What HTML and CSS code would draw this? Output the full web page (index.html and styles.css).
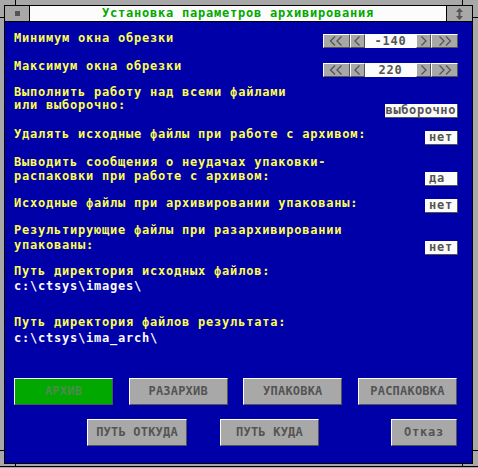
FILE: index.html
```html
<html>
<head>
	<meta charset="utf-8">
	<link rel="stylesheet" href="styles.css">
</head>
<body>
<div class="frame">
	<span class="tick tk-tl"></span>
	<span class="tick tk-tr"></span>
	<span class="tick tk-bl"></span>
	<span class="tick tk-br"></span>
	<span class="tick tk-lt"></span>
	<span class="tick tk-lb"></span>
	<span class="tick tk-rt"></span>
	<span class="tick tk-rb"></span>

	<div class="window">
		<div class="titlebar">
			<div class="sysbtn"><span class="sysmark"></span></div>
			<div class="title">Установка параметров архивирования</div>
			<div class="sizebtn">
				<svg width="7" height="12" viewBox="0 0 7 12"><polygon points="3.5,0 7,4 4.5,4 4.5,8 7,8 3.5,12 0,8 2.5,8 2.5,4 0,4" fill="#545454"/></svg>
			</div>
		</div>

		<div class="panel">
			<div class="row r1">
				<div class="label">Минимум окна обрезки</div>
				<div class="spin">
					<div class="sbtn wide"><svg width="25" height="12" viewBox="0 0 25 12"><polyline points="11,1.5 6.5,6 11,10.5" /><polyline points="17.5,1.5 13,6 17.5,10.5" /></svg></div>
					<div class="sbtn"><svg width="13" height="12" viewBox="0 0 13 12"><polyline points="8.5,1.5 4,6 8.5,10.5" /></svg></div>
					<div class="sval">-140</div>
					<div class="sbtn"><svg width="13" height="12" viewBox="0 0 13 12"><polyline points="4.5,1.5 9,6 4.5,10.5" /></svg></div>
					<div class="sbtn wide"><svg width="25" height="12" viewBox="0 0 25 12"><polyline points="7.5,1.5 12,6 7.5,10.5" /><polyline points="14,1.5 18.5,6 14,10.5" /></svg></div>
				</div>
			</div>

			<div class="row r2">
				<div class="label">Максимум окна обрезки</div>
				<div class="spin">
					<div class="sbtn wide"><svg width="25" height="12" viewBox="0 0 25 12"><polyline points="11,1.5 6.5,6 11,10.5" /><polyline points="17.5,1.5 13,6 17.5,10.5" /></svg></div>
					<div class="sbtn"><svg width="13" height="12" viewBox="0 0 13 12"><polyline points="8.5,1.5 4,6 8.5,10.5" /></svg></div>
					<div class="sval">220</div>
					<div class="sbtn"><svg width="13" height="12" viewBox="0 0 13 12"><polyline points="4.5,1.5 9,6 4.5,10.5" /></svg></div>
					<div class="sbtn wide"><svg width="25" height="12" viewBox="0 0 25 12"><polyline points="7.5,1.5 12,6 7.5,10.5" /><polyline points="14,1.5 18.5,6 14,10.5" /></svg></div>
				</div>
			</div>

			<div class="row r3">
				<div class="label">Выполнить работу над всеми файлами<br>или выборочно:</div>
				<div class="val long">выборочно</div>
			</div>

			<div class="row r4">
				<div class="label">Удалять исходные файлы при работе с архивом:</div>
				<div class="val">нет</div>
			</div>

			<div class="row r5">
				<div class="label">Выводить сообщения о неудачах упаковки-<br>распаковки при работе с архивом:</div>
				<div class="val">да</div>
			</div>

			<div class="row r6">
				<div class="label">Исходные файлы при архивировании упакованы:</div>
				<div class="val">нет</div>
			</div>

			<div class="row r7">
				<div class="label">Результирующие файлы при разархивировании<br>упакованы:</div>
				<div class="val">нет</div>
			</div>

			<div class="path p1">
				<div class="label">Путь директория исходных файлов:</div>
				<div class="pval">c:\ctsys\images\</div>
			</div>

			<div class="path p2">
				<div class="label">Путь директория файлов результата:</div>
				<div class="pval">c:\ctsys\ima_arch\</div>
			</div>

			<div class="actions">
				<div class="btn green">АРХИВ</div>
				<div class="btn">РАЗАРХИВ</div>
				<div class="btn">УПАКОВКА</div>
				<div class="btn">РАСПАКОВКА</div>
			</div>

			<div class="actions second">
				<div class="btn from">ПУТЬ ОТКУДА</div>
				<div class="btn to">ПУТЬ КУДА</div>
				<div class="btn cancel">Отказ</div>
			</div>
		</div>
	</div>
</div>
</body>
</html>
```

FILE: styles.css
```css
html {
	background: #a8a8a8;
}

body {
	margin: 0;
	font-family: "DejaVu Sans Mono", "Liberation Mono", monospace;
	font-weight: bold;
	font-size: 12px;
	letter-spacing: 0.78px;
	line-height: 14px;
	color: #545454;
}

/* outer frame */
.frame {
	position: relative;
	height: 467px;
	box-sizing: border-box;
	padding: 5px 5px 0 4px;
	border-bottom: 1px solid #000;
}

.tick {
	position: absolute;
	background: #000;
}
.tk-tl { left: 15px; top: 0; width: 1px; height: 5px; }
.tk-tr { left: 462px; top: 0; width: 1px; height: 5px; }
.tk-bl { left: 15px; top: 464px; width: 1px; height: 2px; }
.tk-br { left: 462px; top: 464px; width: 1px; height: 2px; }
.tk-lt { left: 0; top: 17px; width: 4px; height: 1px; }
.tk-lb { left: 0; top: 450px; width: 4px; height: 1px; }
.tk-rt { right: 0; top: 17px; width: 5px; height: 1px; }
.tk-rb { right: 0; top: 450px; width: 5px; height: 1px; }

.window {
	height: 459px;
	box-sizing: border-box;
	border: 1px solid #000;
	display: flex;
	flex-direction: column;
}

/* title bar */
.titlebar {
	display: flex;
	height: 15px;
	border-bottom: 1px solid #000;
}
.sysbtn {
	width: 24px;
	border-right: 1px solid #000;
	background: #a8a8a8;
	display: flex;
	align-items: center;
	justify-content: center;
}
.sysmark {
	width: 5px;
	height: 5px;
	background: #545454;
}
.title {
	flex: 1;
	background: #fcfcfc;
	color: #00a800;
	text-align: center;
	line-height: 15px;
}
.sizebtn {
	width: 25px;
	border-left: 1px solid #000;
	background: #a8a8a8;
	display: flex;
	align-items: center;
	justify-content: center;
}

/* main panel */
.panel {
	flex: 1;
	background: #0000a8;
	padding: 9px 14px 0 9px;
}

.label {
	color: #fcfc54;
	white-space: nowrap;
}

.row {
	display: flex;
	justify-content: space-between;
	align-items: flex-start;
}
.r1 { height: 28px; }
.r1 .spin { margin-top: 3px; }
.r2 { height: 27px; }
.r2 .spin { margin-top: 4px; }
.r3 { height: 41px; }
.r3 .label { line-height: 13px; }
.r3 .val { margin-top: 18px; }
.r4 { height: 28px; }
.r4 .val { margin-top: 4px; }
.r5 { height: 41px; }
.r5 .val { margin-top: 17px; }
.r6 { height: 27px; }
.r6 .val { margin-top: 3px; }
.r7 { height: 41px; }
.r7 .label { line-height: 14.5px; }
.r7 .val { margin-top: 18px; }

/* spinner */
.spin {
	display: flex;
	height: 14px;
}
.sbtn {
	width: 13px;
	height: 12px;
	background: #a8a8a8;
	border-top: 1px solid #fcfcfc;
	border-left: 1px solid #fcfcfc;
	border-right: 1px solid #545454;
	border-bottom: 1px solid #545454;
}
.sbtn.wide {
	width: 25px;
}
.sbtn svg {
	display: block;
}
.sbtn polyline {
	fill: none;
	stroke: #545454;
	stroke-width: 1.3;
}
.sval {
	width: 51px;
	height: 14px;
	background: #fcfcfc;
	text-align: center;
	line-height: 14px;
}

/* yes/no value boxes */
.val {
	min-width: 24px;
	height: 13px;
	padding: 0 4px;
	line-height: 13px;
	background: #fcfcfc;
	border-bottom: 1px solid #545454;
	border-right: 1px solid #545454;
}
.val.long {
	padding: 0 1px 0 1px;
	letter-spacing: 0.6px;
}

/* paths */
.p1 { height: 51px; }
.p1 .pval { margin-top: 1px; }
.p2 .pval { margin-top: 2px; }
.pval {
	color: #fcfcfc;
}

/* action buttons */
.actions {
	display: flex;
	justify-content: space-between;
	margin: 33px 1px 0 0;
}
.actions.second {
	justify-content: flex-start;
	margin-top: 14px;
}
.btn {
	width: 97px;
	height: 25px;
	line-height: 25px;
	text-align: center;
	background: #a8a8a8;
	border-top: 1px solid #fcfcfc;
	border-left: 1px solid #fcfcfc;
	border-right: 1px solid #545454;
	border-bottom: 1px solid #545454;
	letter-spacing: 0.2px;
}
.btn.green {
	background: #00a800;
	color: #4c8c4c;
}
.btn.from {
	margin-left: 73px;
	width: 98px;
}
.btn.to {
	margin-left: 33px;
}
.btn.cancel {
	margin-left: auto;
	width: 64px;
	letter-spacing: 0.78px;
}
```
